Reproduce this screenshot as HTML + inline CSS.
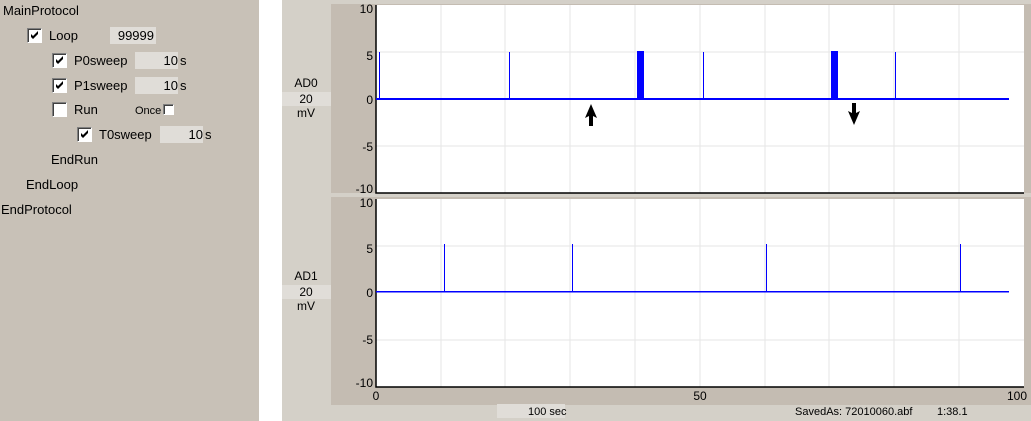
<!DOCTYPE html>
<html><head><style>
body{margin:0;width:1031px;height:421px;overflow:hidden;background:#fff;font-family:"Liberation Sans",sans-serif;font-size:13px;position:relative}
.l{position:absolute;left:0;top:0;width:259px;height:421px;background:#c8c1b7}
.t{position:absolute;color:#000;font-size:13px;line-height:14px}
.cb{position:absolute;width:13px;height:13px;background:#fff;border:1px solid;border-color:#808080 #fff #fff #808080;box-shadow:inset 1px 1px #404040}
.cb svg{position:absolute;left:2px;top:2px}
.box{position:absolute;background:#e0ddd8;text-align:right;font-size:13px;line-height:17px}
.r{position:absolute;left:282px;top:0;width:749px;height:421px;background:#d4d0c8}
</style></head><body>
<div class="l">
<div class="t" style="left:3px;top:4px">MainProtocol</div>
<div class="cb" style="left:27px;top:28px"><svg width="9" height="9"><path d="M1 3l2 2 5-5v3l-5 5-2-2z" fill="#000"/></svg></div>
<div class="t" style="left:49px;top:29px">Loop</div>
<div class="box" style="left:110px;top:27px;width:44px;padding-right:2px">99999</div>
<div class="cb" style="left:52px;top:53px"><svg width="9" height="9"><path d="M1 3l2 2 5-5v3l-5 5-2-2z" fill="#000"/></svg></div>
<div class="t" style="left:74px;top:54px">P0sweep</div>
<div class="box" style="left:135px;top:52px;width:43px">10</div><div class="t" style="left:180px;top:54px">s</div>
<div class="cb" style="left:52px;top:78px"><svg width="9" height="9"><path d="M1 3l2 2 5-5v3l-5 5-2-2z" fill="#000"/></svg></div>
<div class="t" style="left:74px;top:79px">P1sweep</div>
<div class="box" style="left:135px;top:77px;width:43px">10</div><div class="t" style="left:180px;top:79px">s</div>
<div class="cb" style="left:52px;top:102px"></div>
<div class="t" style="left:74px;top:103px">Run</div>
<div class="t" style="left:135px;top:104px;font-size:11px">Once</div>
<div class="cb" style="left:163px;top:104px;width:9px;height:9px"></div>
<div class="cb" style="left:77px;top:127px"><svg width="9" height="9"><path d="M1 3l2 2 5-5v3l-5 5-2-2z" fill="#000"/></svg></div>
<div class="t" style="left:99px;top:128px">T0sweep</div>
<div class="box" style="left:160px;top:126px;width:43px">10</div><div class="t" style="left:205px;top:128px">s</div>
<div class="t" style="left:51px;top:153px">EndRun</div>
<div class="t" style="left:26px;top:178px">EndLoop</div>
<div class="t" style="left:1px;top:203px">EndProtocol</div>
</div>
<div class="r"></div>
<svg style="position:absolute;left:0;top:0" width="1031" height="421" font-family="Liberation Sans,sans-serif" font-size="12">
<rect x="331" y="4" width="700" height="189" fill="#c4bcb2"/>
<rect x="331" y="197" width="700" height="208" fill="#c4bcb2"/>
<rect x="282" y="92" width="49" height="14" fill="#e0ddd8"/>
<rect x="282" y="285" width="49" height="14" fill="#e0ddd8"/>
<text x="306" y="87" text-anchor="middle">AD0</text><text x="306" y="103" text-anchor="middle">20</text><text x="306" y="117" text-anchor="middle">mV</text>
<text x="306" y="280" text-anchor="middle">AD1</text><text x="306" y="296" text-anchor="middle">20</text><text x="306" y="310" text-anchor="middle">mV</text>
<rect x="376" y="5" width="648" height="188" fill="#fff"/>
<rect x="376" y="199" width="648" height="188" fill="#fff"/>
<g stroke="#e6e6e6">
<path d="M441 5V193M505 5V193M570 5V193M635 5V193M700 5V193M765 5V193M829 5V193M894 5V193M959 5V193M376 52H1024M376 146H1024"/>
<path d="M441 199V387M505 199V387M570 199V387M635 199V387M700 199V387M765 199V387M829 199V387M894 199V387M959 199V387M376 246H1024M376 340H1024"/>
</g>
<g stroke="#000" fill="none" stroke-width="1.5">
<path d="M376 5V193H1024"/><path d="M376 199V387H1024"/>
</g>
<g fill="#0000ff">
<rect x="376" y="98" width="633" height="2"/>
<rect x="379" y="52" width="1" height="47"/><rect x="509" y="52" width="1" height="47"/><rect x="703" y="52" width="1" height="47"/><rect x="895" y="52" width="1" height="47"/>
<rect x="376" y="291" width="633" height="1.5"/>
<rect x="444" y="244" width="1" height="48"/><rect x="572" y="244" width="1" height="48"/><rect x="766" y="244" width="1" height="48"/><rect x="960" y="244" width="1" height="48"/>
<rect x="637" y="51" width="7" height="48"/>
<rect x="831" y="51" width="7" height="48"/>
</g>
<path d="M591 104l-6 14 4-2v10h4v-10l4 2z" fill="#000"/>
<path d="M854 125l-6-14 4 2v-10h4v10l4-2z" fill="#000"/>
<g text-anchor="end">
<text x="373" y="13">10</text><text x="373" y="60">5</text><text x="373" y="104">0</text><text x="373" y="151">-5</text><text x="373" y="193">-10</text>
<text x="373" y="207">10</text><text x="373" y="253">5</text><text x="373" y="297">0</text><text x="373" y="344">-5</text><text x="373" y="387">-10</text>
</g>
<text x="376" y="400" text-anchor="middle">0</text><text x="700" y="400" text-anchor="middle">50</text><text x="1017" y="400" text-anchor="middle">100</text>
<rect x="497" y="404" width="68" height="14" fill="#e0ddd8"/>
<text x="528" y="415" font-size="11">100 sec</text>
<text x="795" y="415" font-size="11">SavedAs: 72010060.abf</text>
<text x="937" y="415" font-size="11">1:38.1</text>
</svg>
</body></html>
